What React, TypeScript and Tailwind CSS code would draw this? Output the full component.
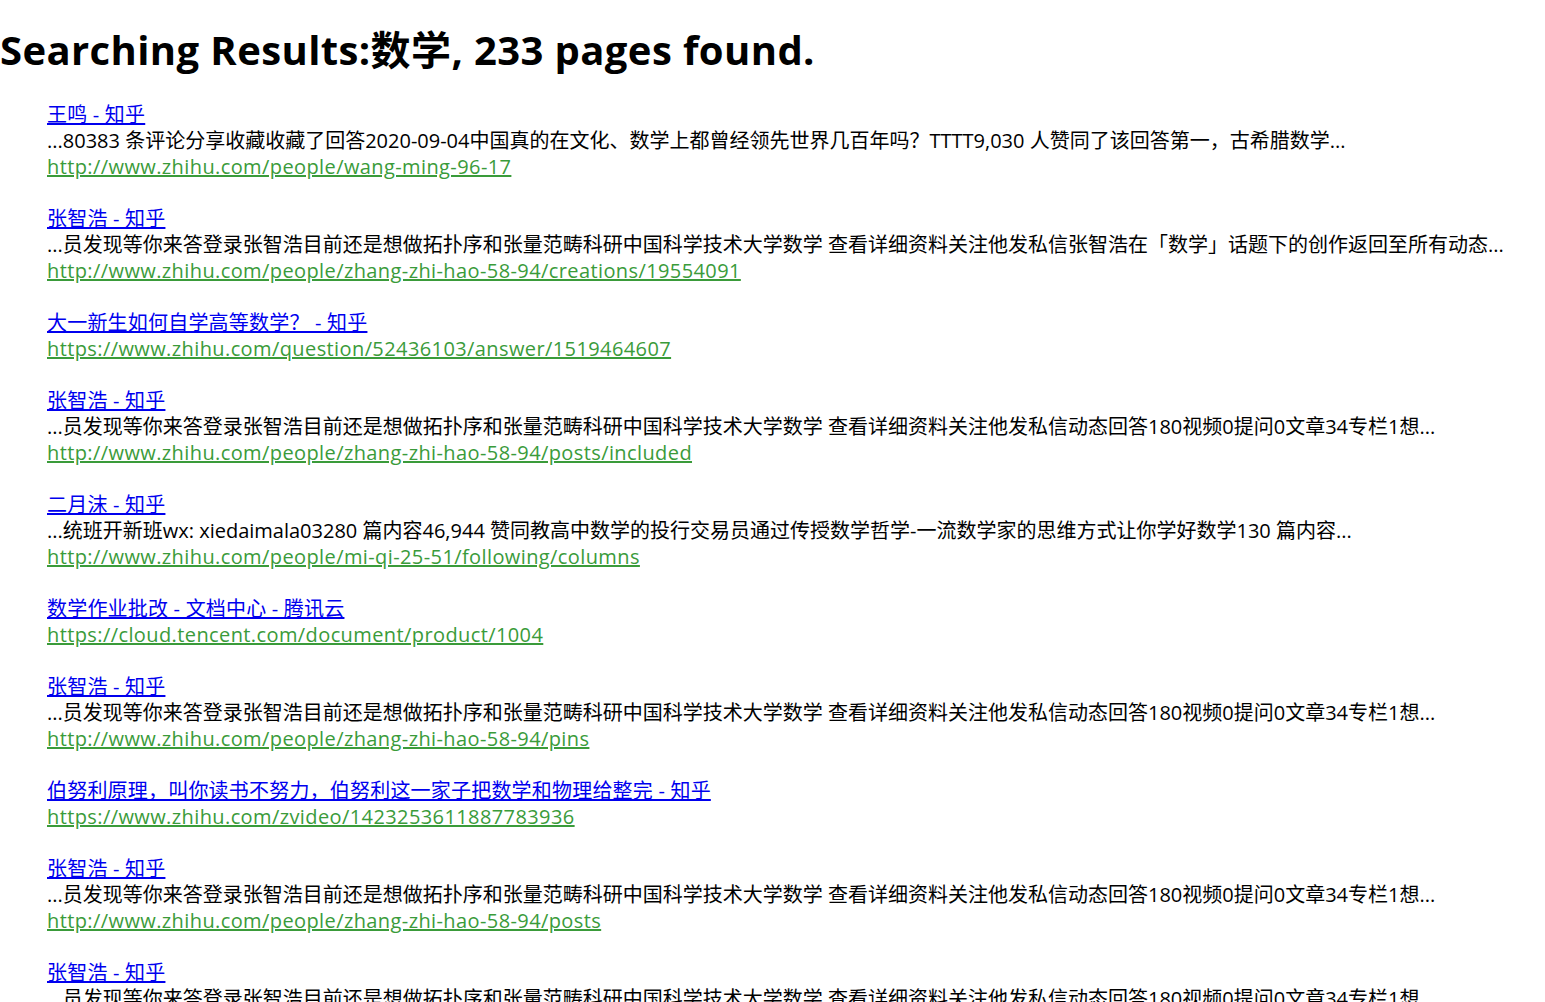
import React from "react";

type Item = { title: string; desc?: string; url: string };

const items: Item[] = [
  {
    title: "王鸣 - 知乎",
    desc: "...80383 条评论分享收藏收藏了回答2020-09-04中国真的在文化、数学上都曾经领先世界几百年吗？TTTT9,030 人赞同了该回答第一，古希腊数学...",
    url: "http://www.zhihu.com/people/wang-ming-96-17",
  },
  {
    title: "张智浩 - 知乎",
    desc: "...员发现等你来答登录张智浩目前还是想做拓扑序和张量范畴科研中国科学技术大学数学 查看详细资料关注他发私信张智浩在「数学」话题下的创作返回至所有动态...",
    url: "http://www.zhihu.com/people/zhang-zhi-hao-58-94/creations/19554091",
  },
  {
    title: "大一新生如何自学高等数学？ - 知乎",
    url: "https://www.zhihu.com/question/52436103/answer/1519464607",
  },
  {
    title: "张智浩 - 知乎",
    desc: "...员发现等你来答登录张智浩目前还是想做拓扑序和张量范畴科研中国科学技术大学数学 查看详细资料关注他发私信动态回答180视频0提问0文章34专栏1想...",
    url: "http://www.zhihu.com/people/zhang-zhi-hao-58-94/posts/included",
  },
  {
    title: "二月沫 - 知乎",
    desc: "...统班开新班wx: xiedaimala03280 篇内容46,944 赞同教高中数学的投行交易员通过传授数学哲学-一流数学家的思维方式让你学好数学130 篇内容...",
    url: "http://www.zhihu.com/people/mi-qi-25-51/following/columns",
  },
  {
    title: "数学作业批改 - 文档中心 - 腾讯云",
    url: "https://cloud.tencent.com/document/product/1004",
  },
  {
    title: "张智浩 - 知乎",
    desc: "...员发现等你来答登录张智浩目前还是想做拓扑序和张量范畴科研中国科学技术大学数学 查看详细资料关注他发私信动态回答180视频0提问0文章34专栏1想...",
    url: "http://www.zhihu.com/people/zhang-zhi-hao-58-94/pins",
  },
  {
    title: "伯努利原理，叫你读书不努力，伯努利这一家子把数学和物理给整完 - 知乎",
    url: "https://www.zhihu.com/zvideo/1423253611887783936",
  },
  {
    title: "张智浩 - 知乎",
    desc: "...员发现等你来答登录张智浩目前还是想做拓扑序和张量范畴科研中国科学技术大学数学 查看详细资料关注他发私信动态回答180视频0提问0文章34专栏1想...",
    url: "http://www.zhihu.com/people/zhang-zhi-hao-58-94/posts",
  },
  {
    title: "张智浩 - 知乎",
    desc: "...员发现等你来答登录张智浩目前还是想做拓扑序和张量范畴科研中国科学技术大学数学 查看详细资料关注他发私信动态回答180视频0提问0文章34专栏1想...",
    url: "http://www.zhihu.com/people/zhang-zhi-hao-58-94",
  },
];

export default function App() {
  return (
    <div
      className="h-[1002px] bg-white text-black text-[20px] leading-[26px] whitespace-nowrap overflow-hidden"
      style={{ fontFamily: '"Open Sans", "Noto Sans CJK SC", sans-serif' }}
    >
      <h1 className="pt-[24px] text-[40px] leading-[52px] font-bold tracking-[0.4px]">
        Searching Results:数学, 233 pages found.
      </h1>
      <div className="pl-[47px] pt-[26px] flex flex-col">
        {items.map((it, i) => (
          <div key={i} className="mb-[26px] flex flex-col items-start">
            <a href="#" className="text-[#0000ee] underline tracking-[0.2px]">
              {it.title}
            </a>
            {it.desc && <div>{it.desc}</div>}
            <a href="#" className="text-[#3a9b3a] underline tracking-[0.4px]">
              {it.url}
            </a>
          </div>
        ))}
      </div>
    </div>
  );
}
